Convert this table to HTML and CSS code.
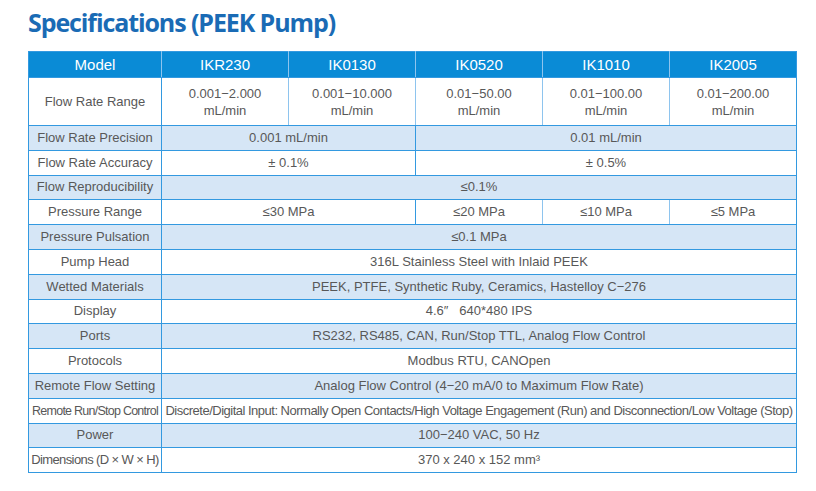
FILE: index.html
```html
<!DOCTYPE html>
<html>
<head>
<meta charset="utf-8">
<link rel="stylesheet" href="styles.css">
</head>
<body>
<h1 class="title">Specifications (PEEK Pump)</h1>
<table class="spec">
  <colgroup>
    <col class="c-label"><col class="c-m"><col class="c-m"><col class="c-m"><col class="c-m"><col class="c-m">
  </colgroup>
  <thead>
    <tr class="head">
      <th>Model</th><th>IKR230</th><th>IK0130</th><th>IK0520</th><th>IK1010</th><th>IK2005</th>
    </tr>
  </thead>
  <tbody>
    <tr class="tall">
      <td class="lbl">Flow Rate Range</td>
      <td class="in">0.001−2.000<br>mL/min</td>
      <td class="in">0.001−10.000<br>mL/min</td>
      <td class="in">0.01−50.00<br>mL/min</td>
      <td class="in">0.01−100.00<br>mL/min</td>
      <td class="in">0.01−200.00<br>mL/min</td>
    </tr>
    <tr class="alt">
      <td class="lbl">Flow Rate Precision</td>
      <td colspan="2">0.001 mL/min</td>
      <td colspan="3">0.01 mL/min</td>
    </tr>
    <tr>
      <td class="lbl">Flow Rate Accuracy</td>
      <td colspan="2">± 0.1%</td>
      <td colspan="3">± 0.5%</td>
    </tr>
    <tr class="alt">
      <td class="lbl">Flow Reproducibility</td>
      <td colspan="5">≤0.1%</td>
    </tr>
    <tr>
      <td class="lbl">Pressure Range</td>
      <td colspan="2">≤30 MPa</td>
      <td class="in">≤20 MPa</td>
      <td class="in">≤10 MPa</td>
      <td class="in">≤5 MPa</td>
    </tr>
    <tr class="alt">
      <td class="lbl">Pressure Pulsation</td>
      <td colspan="5">≤0.1 MPa</td>
    </tr>
    <tr>
      <td class="lbl">Pump Head</td>
      <td colspan="5">316L Stainless Steel with Inlaid PEEK</td>
    </tr>
    <tr class="alt">
      <td class="lbl">Wetted Materials</td>
      <td colspan="5">PEEK, PTFE, Synthetic Ruby, Ceramics, Hastelloy C−276</td>
    </tr>
    <tr>
      <td class="lbl">Display</td>
      <td colspan="5">4.6″&nbsp;&nbsp;&nbsp;640*480 IPS</td>
    </tr>
    <tr class="alt">
      <td class="lbl">Ports</td>
      <td colspan="5">RS232, RS485, CAN, Run/Stop TTL, Analog Flow Control</td>
    </tr>
    <tr>
      <td class="lbl">Protocols</td>
      <td colspan="5">Modbus RTU, CANOpen</td>
    </tr>
    <tr class="alt">
      <td class="lbl">Remote Flow Setting</td>
      <td colspan="5">Analog Flow Control (4−20 mA/0 to Maximum Flow Rate)</td>
    </tr>
    <tr>
      <td class="lbl tight">Remote Run/Stop Control</td>
      <td colspan="5" class="tight-long">Discrete/Digital Input: Normally Open Contacts/High Voltage Engagement (Run) and Disconnection/Low Voltage (Stop)</td>
    </tr>
    <tr class="alt">
      <td class="lbl">Power</td>
      <td colspan="5">100−240 VAC, 50 Hz</td>
    </tr>
    <tr>
      <td class="lbl tight2">Dimensions (D × W × H)</td>
      <td colspan="5">370 x 240 x 152 mm³</td>
    </tr>
  </tbody>
</table>
</body>
</html>
```

FILE: styles.css
```css
html, body {
  margin: 0;
  padding: 0;
  background: #ffffff;
}

body {
  padding: 5px 21px 0 28px;
  font-family: "Liberation Sans", Arial, sans-serif;
}

.title {
  margin: 0 0 12px 0;
  font-family: "Open Sans", "Noto Sans", sans-serif;
  font-weight: 700;
  font-size: 25px;
  line-height: 34px;
  color: #1a6bb5;
  letter-spacing: -1.1px;
}

.spec {
  border-collapse: collapse;
  table-layout: fixed;
  width: 767px;
  color: #585858;
  font-size: 13px;
}

.c-label { width: 133px; }
.c-m { width: 127px; }

.spec th,
.spec td {
  border: 1px solid #3399e0;
  text-align: center;
  vertical-align: middle;
  padding: 0;
  white-space: nowrap;
}

.head th {
  background: #0a8bd6;
  color: #ffffff;
  font-weight: 400;
  font-size: 15px;
  height: 25px;
  border-color: #3399e0;
  border-left-color: #8ec4ee;
  border-right-color: #8ec4ee;
}

.head th:first-child { border-left-color: #3399e0; }
.head th:last-child { border-right-color: #3399e0; }

.spec td {
  height: 23.8px;
  line-height: 16px;
}

.tall td {
  height: 47px;
  line-height: 17px;
}

.alt td {
  background: #d6e6f6;
}

.spec td.in {
  border-left-color: #8ec4ee;
  border-right-color: #8ec4ee;
}

.spec td.in:last-child { border-right-color: #3399e0; }
.spec td.lbl + td.in { border-left-color: #3399e0; }

.tight {
  font-size: 12.5px;
  letter-spacing: -0.75px;
}

.tight-long {
  letter-spacing: -0.5px;
}

.tight2 {
  letter-spacing: -0.6px;
}
```
